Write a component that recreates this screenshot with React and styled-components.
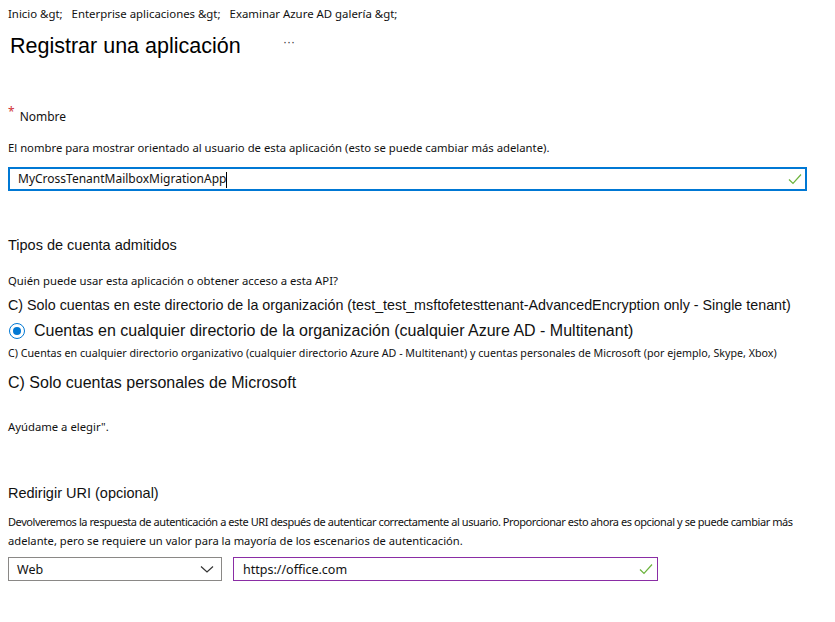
import React from "react";
import styled, { createGlobalStyle } from "styled-components";

const Global = createGlobalStyle`
  html, body { margin: 0; padding: 0; background: #fff; }
  body { font-family: "Liberation Sans", Arial, sans-serif; color: #000; }
`;

const Page = styled.div`
  width: 835px;
  height: 622px;
  padding: 0 8px;
  box-sizing: border-box;
  display: flex;
  flex-direction: column;
`;

const Breadcrumb = styled.nav`
  display: flex;
  gap: 9px;
  font-family: "Noto Sans", sans-serif;
  font-size: 11.4px;
  line-height: 14px;
  margin-top: 7px;
  color: #111;
`;

const TitleRow = styled.div`
  display: flex;
  align-items: center;
  margin-top: 12px;
  padding-left: 2px;
  height: 26px;
`;

const Title = styled.h1`
  margin: 0;
  font-family: "Liberation Sans", Arial, sans-serif;
  font-weight: 400;
  font-size: 21.5px;
  width: 273px;
  white-space: nowrap;
`;

const More = styled.span`
  font-size: 12px;
  color: #333;
  margin-top: -8px;
`;

const Label = styled.div`
  display: flex;
  gap: 5px;
  margin-top: ${(p) => p.$mt}px;
  font-family: "Noto Sans", sans-serif;
  font-size: 12px;
  line-height: 16px;
  color: #111;
`;

const Star = styled.span`
  color: #d13438;
  margin-top: -5px;
`;

const Help = styled.p`
  margin: ${(p) => p.$mt}px 0 0;
  font-family: "Noto Sans", sans-serif;
  font-size: ${(p) => p.$fs || 11.3}px;
  line-height: ${(p) => p.$lh || 14}px;
  color: #111;
  white-space: nowrap;
`;

const HelpLine = styled.span`
  display: block;
  font-size: ${(p) => p.$fs}px;
  letter-spacing: ${(p) => p.$ls}px;
`;

const Field = styled.div`
  display: flex;
  align-items: center;
  box-sizing: border-box;
  width: ${(p) => p.$w}px;
  height: ${(p) => p.$h || 24}px;
  border: ${(p) => p.$border};
  padding: 0 ${(p) => p.$pr}px 0 ${(p) => p.$pl}px;
  font-family: "Noto Sans", sans-serif;
  font-size: ${(p) => p.$fs || 12}px;
  color: #111;
  background: #fff;
`;

const FieldText = styled.span`
  flex: 1;
  white-space: nowrap;
`;

const Caret = styled.span`
  display: inline-block;
  width: 1px;
  height: 16px;
  background: #000;
  vertical-align: middle;
`;

const SectionHead = styled.div`
  margin-top: ${(p) => p.$mt}px;
  font-family: "Liberation Sans", Arial, sans-serif;
  font-size: 14.5px;
  line-height: 17px;
  color: #111;
`;

const Option = styled.div`
  margin-top: ${(p) => p.$mt}px;
  font-family: "Liberation Sans", Arial, sans-serif;
  font-size: ${(p) => p.$fs}px;
  line-height: ${(p) => Math.round(p.$fs) + 3}px;
  white-space: nowrap;
  display: flex;
  align-items: center;
  gap: 9px;
  color: #111;
`;

const Radio = styled.span`
  box-sizing: border-box;
  width: 16px;
  height: 16px;
  border: 1.5px solid #0078d4;
  border-radius: 50%;
  display: inline-flex;
  align-items: center;
  justify-content: center;
  margin-left: 1px;
  &::after {
    content: "";
    width: 8px;
    height: 8px;
    border-radius: 50%;
    background: #0078d4;
  }
`;

const Row = styled.div`
  display: flex;
  gap: 11px;
  margin-top: 7px;
`;

const Check = () => (
  <svg width="14" height="12" viewBox="0 0 14 12">
    <path d="M1 6.5 L5 10.5 L13 1.5" fill="none" stroke="#6bb33c" strokeWidth="1.2" />
  </svg>
);

const Chevron = () => (
  <svg width="14" height="10" viewBox="0 0 14 10">
    <path d="M1 2.5 L7 8 L13 2.5" fill="none" stroke="#333" strokeWidth="1.2" />
  </svg>
);

export default function App() {
  return (
    <>
      <Global />
      <Page>
        <Breadcrumb>
          <span>Inicio &amp;gt;</span>
          <span>Enterprise aplicaciones &amp;gt;</span>
          <span>Examinar Azure AD galería &amp;gt;</span>
        </Breadcrumb>
        <TitleRow>
          <Title>Registrar una aplicación</Title>
          <More>···</More>
        </TitleRow>
        <Label $mt={50}>
          <Star>*</Star>
          <span>Nombre</span>
        </Label>
        <Help $mt={16}>
          El nombre para mostrar orientado al usuario de esta aplicación (esto se puede cambiar más adelante).
        </Help>
        <Field $w={799} $border="2px solid #0078d4" $pl={8} $pr={3} $h={24} style={{ marginTop: 12 }}>
          <FieldText>
            MyCrossTenantMailboxMigrationApp<Caret />
          </FieldText>
          <Check />
        </Field>
        <SectionHead $mt={46}>Tipos de cuenta admitidos</SectionHead>
        <Help $mt={20}>Quién puede usar esta aplicación o obtener acceso a esta API?</Help>
        <Option $mt={9} $fs={14.3}>
          C) Solo cuentas en este directorio de la organización (test_test_msftofetesttenant-AdvancedEncryption only - Single tenant)
        </Option>
        <Option $mt={7} $fs={16}>
          <Radio />
          Cuentas en cualquier directorio de la organización (cualquier Azure AD - Multitenant)
        </Option>
        <Help $mt={6} $fs={10.7}>
          C) Cuentas en cualquier directorio organizativo (cualquier directorio Azure AD - Multitenant) y cuentas personales de Microsoft (por ejemplo, Skype, Xbox)
        </Help>
        <Option $mt={13} $fs={16}>C) Solo cuentas personales de Microsoft</Option>
        <Help $mt={28}>Ayúdame a elegir".</Help>
        <SectionHead $mt={51}>Redirigir URI (opcional)</SectionHead>
        <Help $mt={10} $lh={19}>
          <HelpLine $fs={11} $ls={-0.43}>
            Devolveremos la respuesta de autenticación a este URI después de autenticar correctamente al usuario. Proporcionar esto ahora es opcional y se puede cambiar más
          </HelpLine>
          <HelpLine $fs={11.2} $ls={0}>
            adelante, pero se requiere un valor para la mayoría de los escenarios de autenticación.
          </HelpLine>
        </Help>
        <Row>
          <Field $w={214} $border="1px solid #8a8886" $pl={8} $pr={7} $fs={12.5}>
            <FieldText>Web</FieldText>
            <Chevron />
          </Field>
          <Field $w={425} $border="1px solid #8a2da5" $pl={9} $pr={4} $fs={12.5}>
            <FieldText>https://office.com</FieldText>
            <Check />
          </Field>
        </Row>
      </Page>
    </>
  );
}
